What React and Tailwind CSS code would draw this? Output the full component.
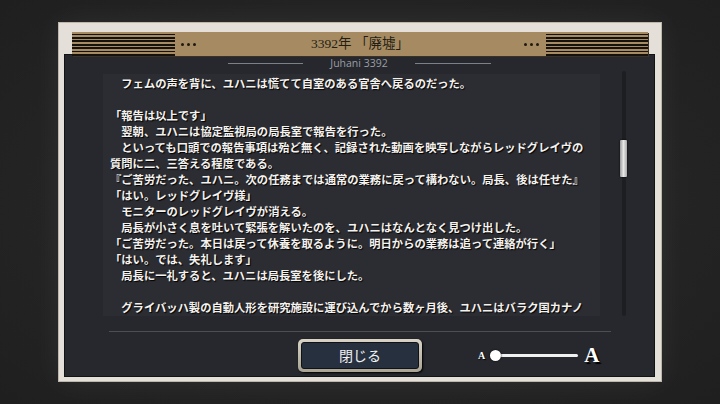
const lines = [
  "　フェムの声を背に、ユハニは慌てて自室のある官舎へ戻るのだった。",
  "",
  "「報告は以上です」",
  "　翌朝、ユハニは協定監視局の局長室で報告を行った。",
  "　といっても口頭での報告事項は殆ど無く、記録された動画を映写しながらレッドグレイヴの",
  "質問に二、三答える程度である。",
  "『ご苦労だった、ユハニ。次の任務までは通常の業務に戻って構わない。局長、後は任せた』",
  "「はい。レッドグレイヴ様」",
  "　モニターのレッドグレイヴが消える。",
  "　局長が小さく息を吐いて緊張を解いたのを、ユハニはなんとなく見つけ出した。",
  "「ご苦労だった。本日は戻って休養を取るように。明日からの業務は追って連絡が行く」",
  "「はい。では、失礼します」",
  "　局長に一礼すると、ユハニは局長室を後にした。",
  "",
  "　グライバッハ製の自動人形を研究施設に運び込んでから数ヶ月後、ユハニはバラク国カナノ",
];

const stripes =
  "bg-[repeating-linear-gradient(to_bottom,#a68b62_0px,#a68b62_1.5px,#15120e_1.5px,#15120e_3.4px)]";

function Dots() {
  return (
    <div className="flex gap-[3px]">
      <span className="w-[3px] h-[3px] rounded-full bg-[#1e1912]" />
      <span className="w-[3px] h-[3px] rounded-full bg-[#1e1912]" />
      <span className="w-[3px] h-[3px] rounded-full bg-[#1e1912]" />
    </div>
  );
}

export default function App() {
  return (
    <div className="w-[720px] h-[404px] bg-[radial-gradient(ellipse_at_center,#2c2c2c_0%,#242424_60%,#1f1f1f_100%)] pt-[22px] pl-[58px] overflow-hidden font-['Noto_Sans_CJK_JP',sans-serif]">
      <div className="w-[604px] h-[360px] bg-[#e4dfd8] border border-[#bdb6aa] shadow-[0_0_30px_rgba(255,255,255,0.06)] flex flex-col pt-[9px]">
        {/* header */}
        <div className="relative z-10 mx-[13px] h-[24px] bg-[#a68b62] flex items-center shadow-[1px_1px_0_#3a3226]">
          <div className={`w-[103px] h-full ${stripes}`} />
          <div className="ml-[6px]">
            <Dots />
          </div>
          <div className="flex-1 text-center text-[13.5px] text-[#241d14] font-['Liberation_Serif','Noto_Sans_CJK_JP',serif]">
            3392年 「廃墟」
          </div>
          <div className="mr-[7px]">
            <Dots />
          </div>
          <div className={`w-[102px] h-full ${stripes}`} />
        </div>

        {/* panel */}
        <div className="-mt-[2px] ml-[5px] mr-[6px] h-[323px] bg-[#26282e] border border-[#121316] flex flex-col pt-[2px]">
          <div className="h-[12px] flex items-center justify-center gap-[27px]">
            <div className="w-[75px] h-px bg-[#7d8187]" />
            <span className="text-[10.5px] leading-none text-[#9a9ea4] font-['Open_Sans',sans-serif]">
              Juhani 3392
            </span>
            <div className="w-[76px] h-px bg-[#7d8187]" />
          </div>

          <div className="flex mt-[5px] h-[242px]">
            <div className="ml-[38px] w-[497px] h-full bg-[#2c2d33] pl-[7px] pt-px overflow-hidden">
              {lines.map((l, i) => (
                <div
                  key={i}
                  className="h-[16px] leading-[16px] text-[11.3px] font-bold text-[#f4f2ee] whitespace-pre [text-shadow:1px_1px_1px_#000]"
                >
                  {l}
                </div>
              ))}
            </div>
            <div className="ml-[20px] w-[8px] -mt-[3px] h-[245px] relative flex justify-center">
              <div className="w-[4px] h-full bg-[#1d1e22] rounded-full" />
              <div className="absolute left-0 top-[69px] w-[7px] h-[37px] bg-gradient-to-r from-[#9a9a9a] via-[#e8e8e8] to-[#a8a8a8] rounded-[1px] shadow-[0_0_2px_#000]" />
            </div>
          </div>

          <div className="ml-[44px] w-[502px] h-px bg-[#4a4f56] mt-[15px]" />

          <div className="flex items-center mt-[7px]">
            <button className="ml-[233px] w-[124px] h-[33px] rounded-[5px] bg-gradient-to-b from-[#d9d4c6] to-[#a9a393] p-[3px] shadow-[1px_1px_2px_#000]">
              <div className="w-full h-full rounded-[3px] bg-[#27303f] border border-[#0f1218] flex items-center justify-center text-[14px] text-[#f2f2f2]">
                閉じる
              </div>
            </button>
            <div className="ml-[56px] flex items-center font-['Liberation_Serif',serif] font-bold text-white [text-shadow:1px_1px_1px_#000]">
              <span className="text-[10px] leading-none">A</span>
              <div className="ml-[5px] relative w-[88px] h-[12px] flex items-center">
                <div className="w-full h-[3px] bg-[#f0f0f0] rounded-full" />
                <div className="absolute left-0 w-[11px] h-[11px] rounded-full bg-white shadow-[0_0_2px_#000]" />
              </div>
              <span className="ml-[6px] text-[21px] leading-none [text-shadow:2px_2px_1px_#000]">A</span>
            </div>
          </div>
        </div>
      </div>
    </div>
  );
}
